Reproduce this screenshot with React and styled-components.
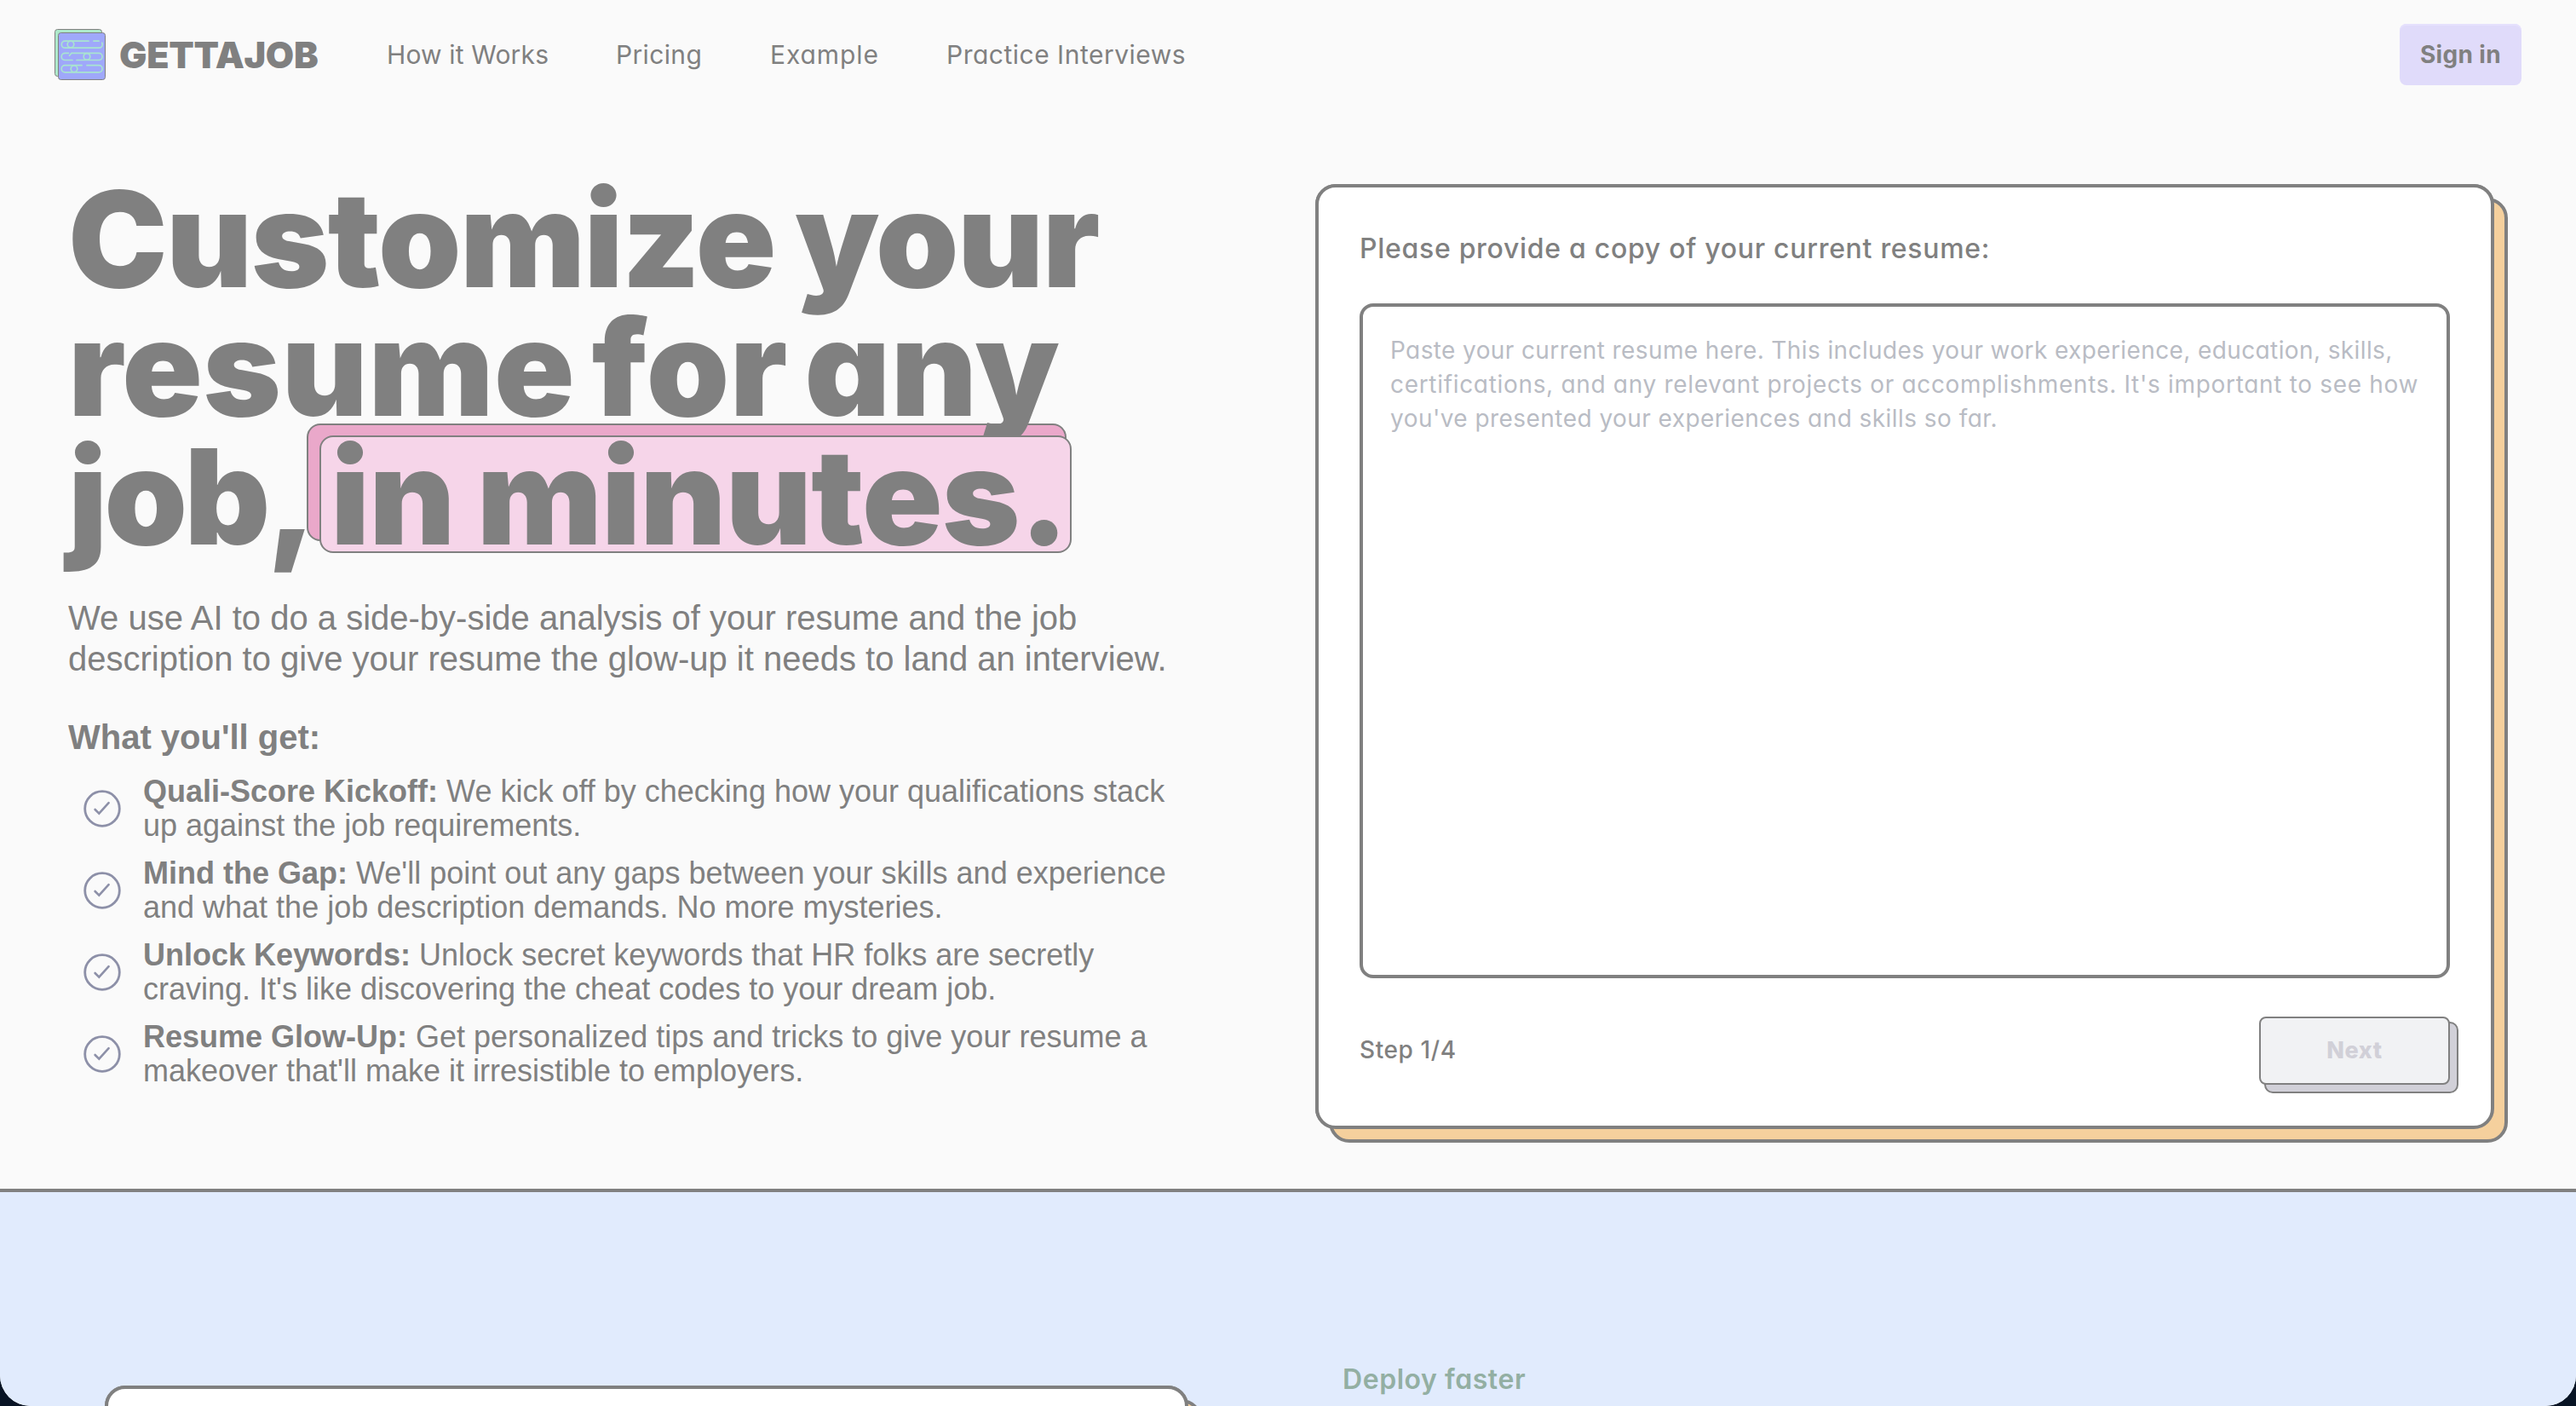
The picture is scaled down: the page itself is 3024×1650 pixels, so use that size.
import styled, { createGlobalStyle } from 'styled-components';

const colors = {
  ink: '#808080',
  page: '#fafafa',
  sky: '#e1ebfd',
  orange: '#f5d09d',
  pink: '#f6d5e9',
  pinkDark: '#eaa8ca',
  lilac: '#e0dbfa',
};

const GlobalStyle = createGlobalStyle`
  *, *::before, *::after { box-sizing: border-box; }
  body {
    margin: 0;
    background: #081425;
    overflow: hidden;
  }
  h1, h2, p, ul { margin: 0; padding: 0; }
`;

const Page = styled.div`
  width: 3024px;
  height: 1650px;
  display: flex;
  flex-direction: column;
  overflow: hidden;
  background: ${colors.page};
  border-radius: 0 0 36px 36px;
  color: ${colors.ink};
  font-family: Inter, 'Open Sans', sans-serif;
  font-feature-settings: 'cv11';
`;

const Header = styled.header`
  height: 128px;
  flex-shrink: 0;
  display: flex;
  align-items: center;
  padding: 0 64px;
`;

const Brand = styled.div`
  display: flex;
  align-items: center;
  width: 390px;
  gap: 16px;
  font-size: 43px;
  font-weight: 900;
  line-height: 60px;
  letter-spacing: ${(p) => p.$track}px;
  white-space: nowrap;
`;

const Nav = styled.nav`
  display: flex;
  flex: 1;
`;

const NavLink = styled.a`
  width: ${(p) => p.$width}px;
  font-size: 30px;
  line-height: 40px;
  letter-spacing: ${(p) => p.$track}px;
  white-space: nowrap;
`;

const SignIn = styled.button`
  width: 143px;
  height: 72px;
  padding: 0;
  border: none;
  border-radius: 8px;
  background: ${colors.lilac};
  box-shadow: inset 0 2px 0 #e6e1fd;
  color: ${colors.ink};
  font: 700 28px/72px Inter, sans-serif;
  letter-spacing: ${(p) => p.$track}px;
`;

const Hero = styled.main`
  height: 1267px;
  flex-shrink: 0;
  display: grid;
  grid-template-columns: 1464px 1384px;
  align-items: start;
  padding: 78px 0 0 80px;
`;

const Headline = styled.h1`
  position: relative;
  isolation: isolate;
  font-size: 156px;
  font-weight: 900;
  line-height: 149px;
`;

const Line = styled.span`
  display: flex;
  height: 151px;
  white-space: nowrap;
  letter-spacing: ${(p) => p.$track}px;
  word-spacing: ${(p) => p.$gap || 0}px;
`;

const JobWord = styled.span`
  width: 295px;
`;

const Mark = styled.span`
  position: relative;
  margin-top: 3px;
  width: 883px;
  height: 138px;

  &::before {
    content: '';
    position: absolute;
    z-index: -1;
    left: -15px;
    top: -14px;
    width: 892px;
    height: 138px;
    border: 2px solid ${colors.ink};
    border-radius: 16px;
    background: ${colors.pinkDark};
  }
`;

const MarkFace = styled.span`
  position: relative;
  display: block;
  height: 138px;
  padding-left: 11px;
  border: 2px solid ${colors.ink};
  border-radius: 16px;
  background: ${colors.pink};
  line-height: 139px;
  letter-spacing: ${(p) => p.$track}px;
  word-spacing: ${(p) => p.$gap}px;
`;

const Copy = styled.div`
  font-family: 'Liberation Sans', Arial, sans-serif;
`;

const Lead = styled.p`
  margin-top: 42px;
  width: 1310px;
  font-size: 40px;
  line-height: 48px;
`;

const SubTitle = styled.h2`
  margin-top: 44px;
  font-size: 40px;
  line-height: 48px;
`;

const Benefits = styled.ul`
  margin-top: 20px;
  display: flex;
  flex-direction: column;
  gap: 16px;
  list-style: none;
`;

const Benefit = styled.li`
  display: flex;
  align-items: center;
  gap: 24px;
  padding-left: 16px;
  font-size: 36px;
  line-height: 40px;
  white-space: nowrap;
`;

const Card = styled.section`
  position: relative;
  z-index: 0;
  margin-top: 10px;
  height: 1109px;
  padding: 50px 48px 0;
  border: 4px solid ${colors.ink};
  border-radius: 24px;

  &::before,
  &::after {
    content: '';
    position: absolute;
    z-index: -1;
    inset: -4px;
    border: 4px solid ${colors.ink};
    border-radius: 24px;
    background: #fff;
  }

  &::before {
    transform: translate(16px, 16px);
    background: ${colors.orange};
  }
`;

const Label = styled.div`
  font-size: 32px;
  font-weight: 500;
  line-height: 44px;
  letter-spacing: ${(p) => p.$track}px;
`;

const ResumeBox = styled.div`
  margin-top: 42px;
  height: 792px;
  padding: 31px 32px;
  border: 4px solid ${colors.ink};
  border-radius: 16px;
  background: #fff;
  color: #b9bcc4;
  font-size: 28px;
  line-height: 40px;
`;

const BoxLine = styled.div`
  white-space: nowrap;
  letter-spacing: ${(p) => p.$track}px;
`;

const CardFooter = styled.div`
  margin-top: 45px;
  display: flex;
  align-items: center;
  justify-content: space-between;
`;

const Step = styled.span`
  padding-bottom: 3px;
  font-size: 28px;
  font-weight: 500;
  letter-spacing: ${(p) => p.$track}px;
`;

const NextButton = styled.div`
  position: relative;
  z-index: 0;
  width: 224px;
  height: 80px;

  &::before {
    content: '';
    position: absolute;
    z-index: -1;
    left: 6px;
    top: 6px;
    width: 228px;
    height: 84px;
    border: 2px solid ${colors.ink};
    border-radius: 10px;
    background: #d1d0d8;
  }
`;

const NextFace = styled.button`
  width: 224px;
  height: 80px;
  padding: 0;
  border: 2px solid ${colors.ink};
  border-radius: 8px;
  background: #f1f2f4;
  color: #d1d0d8;
  font: 800 27px/76px Inter, sans-serif;
  letter-spacing: ${(p) => p.$track}px;
`;

const Features = styled.section`
  flex: 1;
  min-height: 0;
  display: flex;
  align-items: flex-start;
  gap: 181px;
  padding: 200px 0 0 123px;
  border-top: 4px solid ${colors.ink};
  background: ${colors.sky};
`;

const PreviewCard = styled(Card)`
  margin-top: 27px;
  width: 1272px;
  height: 300px;
`;

const Eyebrow = styled.h2`
  font-size: 32px;
  font-weight: 600;
  line-height: 40px;
  color: #93afa3;
  letter-spacing: ${(p) => p.$track}px;
`;

const Logo = () => (
  <svg width="60" height="60" viewBox="0 0 60 60" fill="none">
    <rect x="0.5" y="0.5" width="55" height="55" rx="3" fill="#aeeacb" stroke="#808080" />
    <rect x="4.5" y="4.5" width="55" height="55" rx="3" fill="#9fa8fa" stroke="#808080" />
    <g stroke="#a9e4d0" strokeWidth="1.7" strokeLinecap="round">
      <path d="M40 14.2H12.3a4 4 0 0 0 0 8H52a4 4 0 0 0 3.8-6M46 14.2h6" />
      <circle cx="19" cy="18" r="3.8" />
      <path d="M16.5 28.3h-4.2a4 4 0 0 0 0 8.2H21M20 28.3H52a4 4 0 0 1 0 8.2H26M20 28.3l-2.5 3" />
      <circle cx="38" cy="32.4" r="3.8" />
      <path d="M32 42.7H12.3a4 4 0 0 0 0 8.2H52a4 4 0 0 0 0-8.2H38" />
      <circle cx="23" cy="46.8" r="3.8" />
    </g>
  </svg>
);

const CheckCircle = () => (
  <svg width="48" height="48" viewBox="0 0 48 48" fill="none" stroke="#8d90a8">
    <circle cx="24" cy="24" r="20.3" strokeWidth="2.8" />
    <path d="M15.6 25l4.7 4.6L31.6 17.2" strokeWidth="2.6" strokeLinecap="round" />
  </svg>
);

const links = [
  { label: 'How it Works', width: 269, track: 0.15 },
  { label: 'Pricing', width: 181, track: 0.35 },
  { label: 'Example', width: 207, track: 0.9 },
  { label: 'Practice Interviews', width: 300, track: 0.5 },
];

const benefits = [
  {
    title: 'Quali-Score Kickoff:',
    lines: ['We kick off by checking how your qualifications stack', 'up against the job requirements.'],
  },
  {
    title: 'Mind the Gap:',
    lines: ["We'll point out any gaps between your skills and experience", 'and what the job description demands. No more mysteries.'],
  },
  {
    title: 'Unlock Keywords:',
    lines: ['Unlock secret keywords that HR folks are secretly', "craving. It's like discovering the cheat codes to your dream job."],
  },
  {
    title: 'Resume Glow-Up:',
    lines: ['Get personalized tips and tricks to give your resume a', "makeover that'll make it irresistible to employers."],
  },
];

const placeholder = [
  { text: 'Paste your current resume here. This includes your work experience, education, skills,', track: 0.39 },
  { text: "certifications, and any relevant projects or accomplishments. It's important to see how", track: 0.68 },
  { text: "you've presented your experiences and skills so far.", track: 0.45 },
];

export default function App() {
  return (
    <>
      <GlobalStyle />
      <Page>
        <Header>
          <Brand $track={-0.3}>
            <Logo />
            GETTAJOB
          </Brand>
          <Nav>
            {links.map((link) => (
              <NavLink key={link.label} $width={link.width} $track={link.track}>
                {link.label}
              </NavLink>
            ))}
          </Nav>
          <SignIn $track={0.35}>Sign in</SignIn>
        </Header>

        <Hero>
          <div>
            <Headline>
              <Line $track={-1.6} $gap={-6}>Customize your</Line>
              <Line $track={0.5} $gap={-12}>resume for any</Line>
              <Line $track={-3.6}>
                <JobWord>job,</JobWord>
                <Mark>
                  <MarkFace $track={-0.9} $gap={-4}>in minutes.</MarkFace>
                </Mark>
              </Line>
            </Headline>
            <Copy>
              <Lead>
                We use AI to do a side-by-side analysis of your resume and the job
                <br />
                description to give your resume the glow-up it needs to land an interview.
              </Lead>
              <SubTitle>What you'll get:</SubTitle>
              <Benefits>
                {benefits.map((item) => (
                  <Benefit key={item.title}>
                    <CheckCircle />
                    <p>
                      <strong>{item.title}</strong> {item.lines[0]}
                      <br />
                      {item.lines[1]}
                    </p>
                  </Benefit>
                ))}
              </Benefits>
            </Copy>
          </div>

          <Card>
            <Label $track={0.7}>Please provide a copy of your current resume:</Label>
            <ResumeBox>
              {placeholder.map((line) => (
                <BoxLine key={line.text} $track={line.track}>
                  {line.text}
                </BoxLine>
              ))}
            </ResumeBox>
            <CardFooter>
              <Step $track={0.6}>Step 1/4</Step>
              <NextButton>
                <NextFace $track={0.6} disabled>
                  Next
                </NextFace>
              </NextButton>
            </CardFooter>
          </Card>
        </Hero>

        <Features>
          <PreviewCard as="div" />
          <Eyebrow $track={0.55}>Deploy faster</Eyebrow>
        </Features>
      </Page>
    </>
  );
}
